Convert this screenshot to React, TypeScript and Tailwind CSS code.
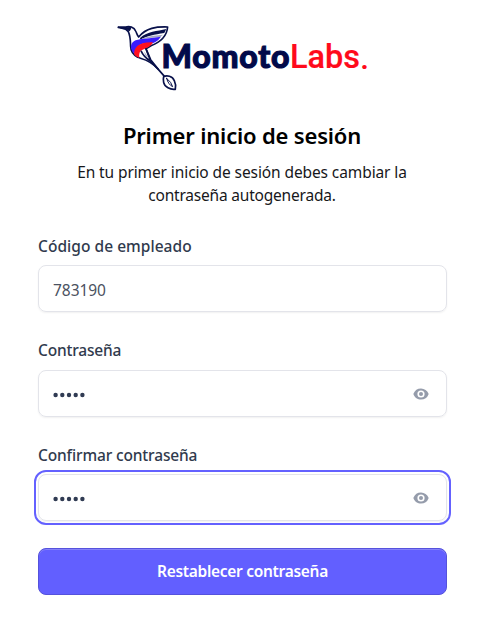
import React from "react";

const FONT = "font-['Noto_Sans',sans-serif]";

function Logo() {
  return (
    <svg className="block h-20 w-[270px]" viewBox="0 0 270 80" role="img" aria-label="MomotoLabs.">
      <g transform="translate(0.3 0) scale(0.33333)" strokeLinejoin="round" strokeLinecap="round">
        <path d="M24 37 L46 37 C56 31 72 37 76 48 C80 56 81 62 85 66 C108 38 138 35 172 36 C170 59 154 80 122 92 L107 101 L121 134 L144 163 C120 134 96 132 82 127 C70 120 61 110 61 94 C60 77 61 65 54 50 L45 42 Z" fill="#fff" stroke="#08104a" strokeWidth="5" />
        <path d="M24 36 L46 36 L62 38 L58 47 L46 43 Z" fill="#08104a" stroke="#08104a" strokeWidth="3" />
        <path d="M90 68 C112 49 140 49 168 42 L162 54 C132 59 112 62 88 75 Z" fill="#08104a" />
        <path d="M98 70 C119 61 139 61 158 59 L149 67 C126 68 108 69 89 75 Z" fill="#a6a9c1" />
        <path d="M63 103 C58 75 82 73 102 71 C122 68 139 68 152 65 C142 79 133 83 124 85 C97 80 78 89 73 118 Q66 111 63 103 Z" fill="#3a1bff" />
        <path d="M72 119 C69 99 84 80 128 82 C121 99 102 100 91 108 Q85 115 87 129 Q77 125 72 119 Z" fill="#ff1020" />
        <path d="M93 109 Q100 125 121 139 L144 163 L165 187 M107 101 L119 134" fill="none" stroke="#08104a" strokeWidth="5" />
        <path d="M101 109 L116 130 L106 123 Z" fill="#a6a9c1" />
        <path d="M160 185 C169 180 187 183 192 197 Q198 209 195 223 C180 225 163 216 160 202 Q158 192 160 185 Z" fill="#fff" stroke="#08104a" strokeWidth="5" />
        <path d="M169 190 Q174 209 187 215 Q184 202 169 190 Z" fill="#fff" stroke="#08104a" strokeWidth="3" />
      </g>
      <text x="51.5" y="52.5" textLength="128" fontSize="32" fontWeight="900" fill="#020a4a" stroke="#020a4a" strokeWidth="1.1" className="font-[Lato,sans-serif]">Momoto</text>
      <text x="180" y="52.5" textLength="70" fontSize="32.5" fontWeight="500" fill="#ff0a1b" stroke="#ff0a1b" strokeWidth="0.2" className="font-[Roboto,sans-serif]">Labs</text>
      <text x="250.5" y="54" fontSize="28" fontWeight="700" fill="#ff0a1b" className="font-[Roboto,sans-serif]">.</text>
    </svg>
  );
}

function Eye() {
  return (
    <svg viewBox="0 0 20 20" className="h-4 w-4 fill-[#959cab]">
      <path d="M10 12.5a2.5 2.5 0 1 0 0-5 2.5 2.5 0 0 0 0 5Z" />
      <path fillRule="evenodd" clipRule="evenodd" d="M.664 10.59a1.651 1.651 0 0 1 0-1.186A10.004 10.004 0 0 1 10 3c4.257 0 7.893 2.66 9.336 6.41.147.381.146.804 0 1.186A10.004 10.004 0 0 1 10 17c-4.257 0-7.893-2.66-9.336-6.41ZM14.5 10a4.5 4.5 0 1 1-9 0 4.5 4.5 0 0 1 9 0Z" />
    </svg>
  );
}

function Dots() {
  return (
    <svg viewBox="0 0 34 6" className="mt-0.5 h-1.5 w-[34px] fill-[#303b53]">
      {[2.6, 9.3, 16, 22.7, 29.4].map((x) => (
        <circle key={x} cx={x} cy="3" r="2.2" />
      ))}
    </svg>
  );
}

function Field({ label, className, focused, children, eye }: { label: string; className: string; focused?: boolean; children: React.ReactNode; eye?: boolean }) {
  return (
    <div className={`flex flex-col justify-between ${className}`}>
      <div className="self-start whitespace-nowrap text-[15.5px] leading-5 font-medium text-[#303a4d]">{label}</div>
      <div className={`flex h-[47px] items-center justify-between rounded-lg border-[1.5px] border-[#e3e4ea] pr-[17px] pl-[14px] shadow-[0_1px_2px_rgba(0,0,0,0.06)] ${focused ? "outline-2 outline-offset-2 outline-[#6461ff]" : ""}`}>
        {children}
        {eye && <Eye />}
      </div>
    </div>
  );
}

export default function App() {
  return (
    <main className={`h-[628px] w-[486px] overflow-hidden bg-white pt-[15px] ${FONT}`}>
      <div className="pl-[110px]"><Logo /></div>
      <header className="flex flex-col items-center pt-[25px] pr-[2px] text-center text-black">
        <h1 className="whitespace-nowrap text-[22px] leading-[30px] font-semibold tracking-[-0.18px]">Primer inicio de sesión</h1>
        <p className="pt-[10px] text-[15.5px] leading-[24px] whitespace-nowrap text-[#17171b]">
          <span className="block tracking-[-0.1px]">En tu primer inicio de sesión debes cambiar la</span>
          <span className="mt-[-1px] block tracking-[-0.2px]">contraseña autogenerada.</span>
        </p>
      </header>
      <form className="flex flex-col pt-[29px] pr-[39px] pl-[38px]">
        <Field label="Código de empleado" className="h-[76px] tracking-[0.04px]">
          <span className="pt-[3px] text-[15.5px] leading-5 tracking-[-0.05px] text-[#4b5261]">783190</span>
        </Field>
        <Field label="Contraseña" className="mt-[28px] h-[77px] tracking-[-0.2px]" eye><Dots /></Field>
        <Field label="Confirmar contraseña" className="mt-[28px] h-[76px] tracking-[-0.15px]" focused eye><Dots /></Field>
        <button type="button" className="mt-[27px] h-[47px] rounded-lg border border-[#5552dc] bg-[#625fff] text-[15.5px] font-semibold tracking-[-0.3px] text-white shadow-[inset_0_1px_0_#8581fa]">Restablecer contraseña</button>
      </form>
    </main>
  );
}
